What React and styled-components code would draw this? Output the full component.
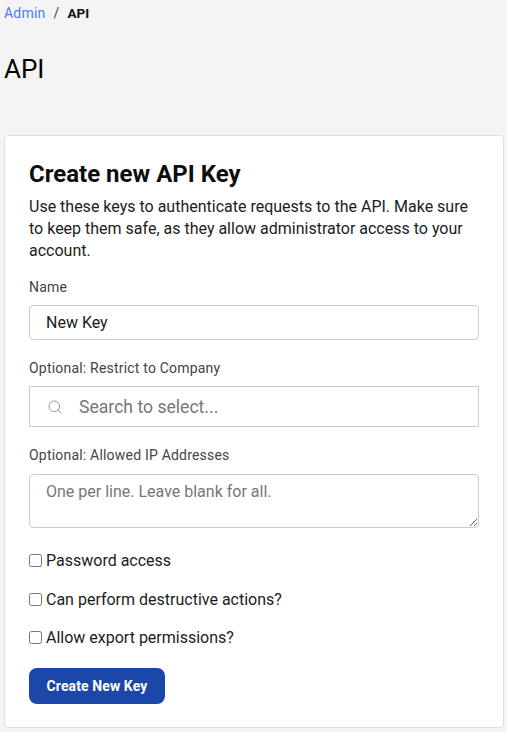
import React from 'react';
import styled, { createGlobalStyle } from 'styled-components';
import { Search } from 'lucide-react';

const GlobalStyle = createGlobalStyle`
  html, body {
    margin: 0;
    padding: 0;
    background: #f4f4f4;
    font-family: Roboto, "Liberation Sans", sans-serif;
    color: #111;
  }
  * { box-sizing: border-box; }
`;

const Page = styled.div`
  width: 507px;
  height: 732px;
  overflow: hidden;
  padding: 0 4px;
`;

const Breadcrumbs = styled.nav`
  display: flex;
  align-items: center;
  height: 26px;
  font-size: 14px;
  letter-spacing: 0.2px;
`;

const Crumb = styled.a`
  color: #4f7bf0;
`;

const Slash = styled.span`
  margin: 0 8px;
  color: #444;
`;

const Current = styled.span`
  font-weight: 700;
  font-size: 13.5px;
  letter-spacing: 0;
`;

const PageTitle = styled.h1`
  margin: 28px 0 0;
  height: 81px;
  font-size: 26px;
  line-height: 30px;
  font-weight: 400;
  color: #000;
`;

const Card = styled.section`
  background: #fff;
  border: 1px solid #dfdfdf;
  border-radius: 4px;
  width: 500px;
  height: 593px;
  padding: 24px;
`;

const CardTitle = styled.h2`
  margin: 0 0 8px;
  font-size: 24px;
  line-height: 28px;
  font-weight: 700;
  color: #0d0d0d;
`;

const Intro = styled.p`
  margin: 0 0 17px;
  font-size: 16px;
  line-height: 22px;
  color: #1c1c1c;
`;

const Field = styled.div`
  margin-bottom: ${(p) => p.$gap}px;
`;

const Label = styled.label`
  display: block;
  margin-bottom: ${(p) => p.$gap || 10}px;
  font-size: 14px;
  line-height: 16px;
  letter-spacing: 0.2px;
  color: #444;
`;

const TextInput = styled.input`
  display: block;
  width: 100%;
  height: 35px;
  padding: 0 16px;
  border: 1px solid #ccc;
  border-radius: 4px;
  background: #fff;
  font: 16px Roboto, sans-serif;
  color: #1a1a1a;
  outline: none;
`;

const SearchBox = styled.div`
  display: flex;
  align-items: center;
  height: 41px;
  padding-left: 17px;
  border: 1px solid #ccc;
  color: #999;
`;

const SearchInput = styled.input`
  flex: 1;
  min-width: 0;
  margin-left: 16px;
  padding: 0;
  border: 0;
  outline: none;
  font: 17.6px Roboto, sans-serif;
  color: #1a1a1a;
  &::placeholder { color: #777; opacity: 1; }
`;

const TextArea = styled.textarea`
  display: block;
  width: 100%;
  height: 54px;
  padding: 7px 16px;
  border: 1px solid #ccc;
  border-radius: 4px;
  font: 16px/20px Roboto, sans-serif;
  outline: none;
  &::placeholder { color: #777; opacity: 1; }
`;

const CheckRow = styled.label`
  display: flex;
  align-items: center;
  height: 20px;
  margin-bottom: 19px;
  font-size: 16px;
  color: #1c1c1c;
  &:nth-of-type(2) { margin-bottom: 18px; }
`;

const CheckBox = styled.input.attrs({ type: 'checkbox' })`
  width: 13px;
  height: 13px;
  margin: 0 4px 0 0;
`;

const SubmitButton = styled.button`
  display: block;
  width: 136px;
  height: 36px;
  margin-top: 21px;
  border: 0;
  border-radius: 8px;
  background: #1a47a8;
  color: #fff;
  font: 700 14px Roboto, sans-serif;
  letter-spacing: 0.1px;
`;

const options = ['Password access', 'Can perform destructive actions?', 'Allow export permissions?'];

export default function App() {
  return (
    <Page>
      <GlobalStyle />
      <Breadcrumbs>
        <Crumb>Admin</Crumb>
        <Slash>/</Slash>
        <Current>API</Current>
      </Breadcrumbs>
      <PageTitle>API</PageTitle>
      <Card>
        <CardTitle>Create new API Key</CardTitle>
        <Intro>
          Use these keys to authenticate requests to the API. Make sure to keep them safe, as they allow administrator access to your account.
        </Intro>
        <Field $gap={20}>
          <Label>Name</Label>
          <TextInput defaultValue="New Key" />
        </Field>
        <Field $gap={20}>
          <Label>Optional: Restrict to Company</Label>
          <SearchBox>
            <Search size={16} strokeWidth={1.5} />
            <SearchInput placeholder="Search to select..." />
          </SearchBox>
        </Field>
        <Field $gap={22}>
          <Label $gap={11}>Optional: Allowed IP Addresses</Label>
          <TextArea placeholder="One per line. Leave blank for all." />
        </Field>
        {options.map((option) => (
          <CheckRow key={option}>
            <CheckBox />
            {option}
          </CheckRow>
        ))}
        <SubmitButton>Create New Key</SubmitButton>
      </Card>
    </Page>
  );
}
